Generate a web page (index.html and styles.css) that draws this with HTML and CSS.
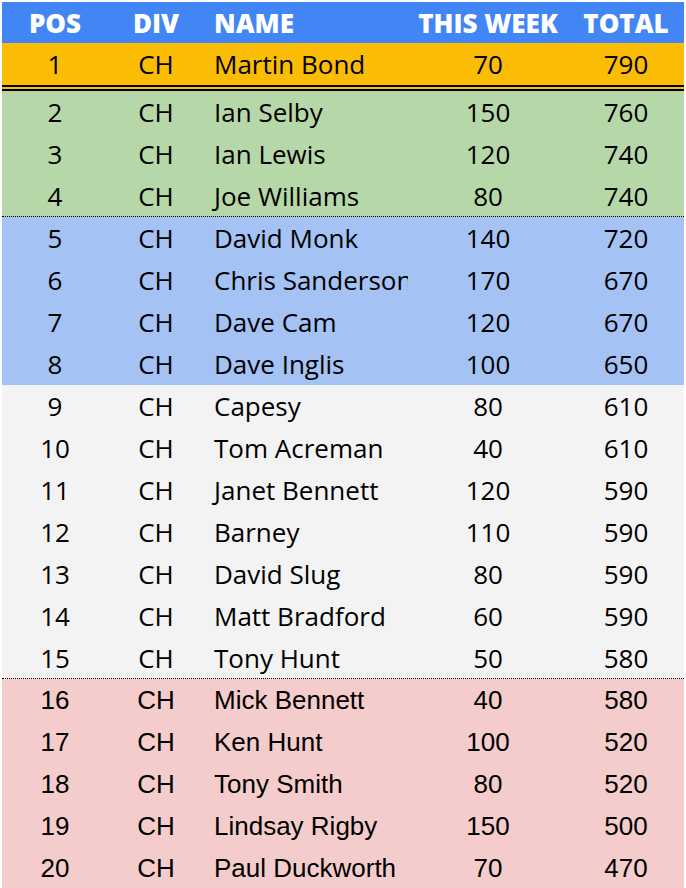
FILE: index.html
```html
<!DOCTYPE html>
<html>
<head>
<meta charset="utf-8">
<link rel="stylesheet" href="styles.css">
</head>
<body>
<div class="sheet">
  <div class="row head">
    <div class="c pos">POS</div><div class="c div">DIV</div><div class="c name">NAME</div><div class="c wk">THIS WEEK</div><div class="c tot">TOTAL</div>
  </div>
  <div class="row gold double">
    <div class="c pos">1</div><div class="c div">CH</div><div class="c name">Martin Bond</div><div class="c wk">70</div><div class="c tot">790</div>
  </div>
  <div class="row green">
    <div class="c pos">2</div><div class="c div">CH</div><div class="c name">Ian Selby</div><div class="c wk">150</div><div class="c tot">760</div>
  </div>
  <div class="row green">
    <div class="c pos">3</div><div class="c div">CH</div><div class="c name">Ian Lewis</div><div class="c wk">120</div><div class="c tot">740</div>
  </div>
  <div class="row green dotted">
    <div class="c pos">4</div><div class="c div">CH</div><div class="c name">Joe Williams</div><div class="c wk">80</div><div class="c tot">740</div>
  </div>
  <div class="row blue">
    <div class="c pos">5</div><div class="c div">CH</div><div class="c name">David Monk</div><div class="c wk">140</div><div class="c tot">720</div>
  </div>
  <div class="row blue">
    <div class="c pos">6</div><div class="c div">CH</div><div class="c name">Chris Sanderson</div><div class="c wk">170</div><div class="c tot">670</div>
  </div>
  <div class="row blue">
    <div class="c pos">7</div><div class="c div">CH</div><div class="c name">Dave Cam</div><div class="c wk">120</div><div class="c tot">670</div>
  </div>
  <div class="row blue">
    <div class="c pos">8</div><div class="c div">CH</div><div class="c name">Dave Inglis</div><div class="c wk">100</div><div class="c tot">650</div>
  </div>
  <div class="row grey">
    <div class="c pos">9</div><div class="c div">CH</div><div class="c name">Capesy</div><div class="c wk">80</div><div class="c tot">610</div>
  </div>
  <div class="row grey">
    <div class="c pos">10</div><div class="c div">CH</div><div class="c name">Tom Acreman</div><div class="c wk">40</div><div class="c tot">610</div>
  </div>
  <div class="row grey">
    <div class="c pos">11</div><div class="c div">CH</div><div class="c name">Janet Bennett</div><div class="c wk">120</div><div class="c tot">590</div>
  </div>
  <div class="row grey">
    <div class="c pos">12</div><div class="c div">CH</div><div class="c name">Barney</div><div class="c wk">110</div><div class="c tot">590</div>
  </div>
  <div class="row grey">
    <div class="c pos">13</div><div class="c div">CH</div><div class="c name">David Slug</div><div class="c wk">80</div><div class="c tot">590</div>
  </div>
  <div class="row grey">
    <div class="c pos">14</div><div class="c div">CH</div><div class="c name">Matt Bradford</div><div class="c wk">60</div><div class="c tot">590</div>
  </div>
  <div class="row grey dotted">
    <div class="c pos">15</div><div class="c div">CH</div><div class="c name">Tony Hunt</div><div class="c wk">50</div><div class="c tot">580</div>
  </div>
  <div class="row pink arial">
    <div class="c pos">16</div><div class="c div">CH</div><div class="c name">Mick Bennett</div><div class="c wk">40</div><div class="c tot">580</div>
  </div>
  <div class="row pink arial">
    <div class="c pos">17</div><div class="c div">CH</div><div class="c name">Ken Hunt</div><div class="c wk">100</div><div class="c tot">520</div>
  </div>
  <div class="row pink arial">
    <div class="c pos">18</div><div class="c div">CH</div><div class="c name">Tony Smith</div><div class="c wk">80</div><div class="c tot">520</div>
  </div>
  <div class="row pink arial">
    <div class="c pos">19</div><div class="c div">CH</div><div class="c name">Lindsay Rigby</div><div class="c wk">150</div><div class="c tot">500</div>
  </div>
  <div class="row pink arial">
    <div class="c pos">20</div><div class="c div">CH</div><div class="c name">Paul Duckworth</div><div class="c wk">70</div><div class="c tot">470</div>
  </div>
</div>
</body>
</html>
```

FILE: styles.css
```css
html, body {
  margin: 0;
  padding: 0;
  background: #ffffff;
}
body {
  overflow: hidden;
}
.sheet {
  margin: 2px 2px 0 2px;
  font-family: "Open Sans", "Noto Sans", sans-serif;
  font-size: 26px;
  color: #000;
}
.row {
  display: grid;
  grid-template-columns: 106px 96px 204px 160px 116px;
  height: 42px;
  box-sizing: border-box;
}
.c {
  display: flex;
  align-items: center;
  justify-content: center;
  overflow: hidden;
  white-space: nowrap;
}
.c.name {
  justify-content: flex-start;
  padding-left: 10px;
}
.head {
  height: 41px;
  background: #4285f4;
  color: #fff;
  font-weight: 800;
}
.gold { background: #fbbc04; }
.green { background: #b6d7a8; }
.blue { background: #a4c2f4; }
.grey { background: #f3f3f3; }
.pink { background: #f4cccc; }
.double {
  height: 48px;
  border-bottom: 6px double #000;
}
.dotted {
  border-bottom: 1px dotted #000;
}
.arial {
  font-family: "Liberation Sans", Arial, sans-serif;
}
```
